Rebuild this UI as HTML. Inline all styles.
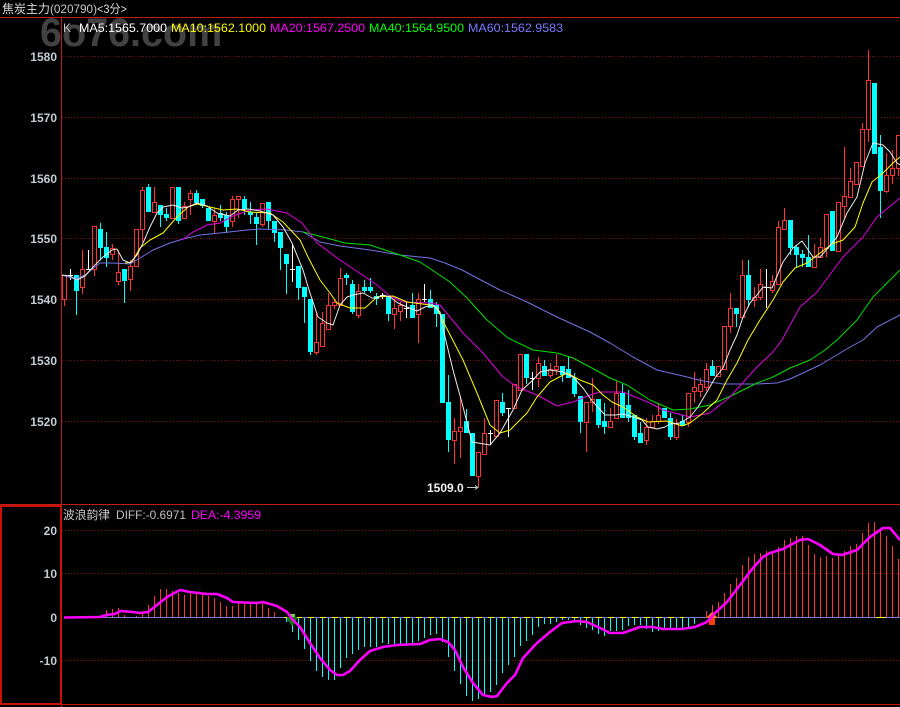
<!DOCTYPE html>
<html>
<head>
<meta charset="utf-8">
<title>焦炭主力</title>
<style>
html,body{margin:0;padding:0;background:#000;width:900px;height:707px;overflow:hidden}
svg{display:block}
text{font-family:"Liberation Sans","Noto Sans CJK SC",sans-serif;font-size:12px}
.ax{font-weight:bold;fill:#c4ccd4;text-anchor:end}
</style>
</head>
<body>
<svg width="900" height="707" viewBox="0 0 900 707" xmlns="http://www.w3.org/2000/svg">
<rect width="900" height="707" fill="#000"/>

<!-- watermark -->
<text x="40" y="46" style="font-size:39.5px;font-weight:bold" fill="#424242">6o76.com</text>

<!-- grid -->
<path fill="none" stroke="#8a0c0c" stroke-width="1" stroke-dasharray="1 2" d="M62 56.5H900M62 117.5H900M62 178.5H900M62 238.5H900M62 299.5H900M62 360.5H900M62 421.5H900M62 530.5H900M62 573.5H900M62 660.5H900"/>

<!-- frame -->
<path fill="none" stroke="#c01c14" stroke-width="1" d="M0 17.5H900M61.5 17V505M0 504.5H900M61.5 704V707"/>
<path fill="none" stroke="#c81206" stroke-width="1" d="M62 704.5H900"/>
<path fill="none" stroke="#c81206" stroke-width="2" d="M1 506V704M0 506H62M61 505V705M0 704H62"/>

<!-- candles: red outlines -->
<path fill="none" stroke="#ff3232" stroke-width="1" d="M62.5 275.5h4v24h-4zM80.5 269.5h4v18h-4zM92.5 226.5h4v43h-4zM110.5 248.5h4v6h-4zM116.5 272.5h4v9h-4zM128.5 266.5h4v13h-4zM134.5 229.5h4v37h-4zM140.5 190.5h4v39h-4zM152.5 202.5h4v10h-4zM170.5 187.5h4v31h-4zM182.5 206.5h4v12h-4zM188.5 193.5h4v6h-4zM212.5 215.5h4v6h-4zM230.5 199.5h4v22h-4zM236.5 196.5h4v3h-4zM260.5 203.5h4v21h-4zM314.5 342.5h4v10h-4zM320.5 323.5h4v23h-4zM326.5 305.5h4v24h-4zM332.5 302.5h4v3h-4zM338.5 278.5h4v27h-4zM356.5 291.5h4v24h-4zM392.5 308.5h4v6h-4zM398.5 305.5h4v6h-4zM416.5 299.5h4v15h-4zM452.5 431.5h4v9h-4zM458.5 427.5h4v4h-4zM476.5 452.5h4v24h-4zM482.5 433.5h4v21h-4zM494.5 400.5h4v36h-4zM512.5 384.5h4v24h-4zM518.5 354.5h4v36h-4zM536.5 363.5h4v15h-4zM548.5 369.5h4v6h-4zM554.5 366.5h4v3h-4zM584.5 402.5h4v20h-4zM590.5 399.5h4v3h-4zM608.5 421.5h4v6h-4zM614.5 393.5h4v25h-4zM644.5 427.5h4v13h-4zM650.5 421.5h4v6h-4zM656.5 415.5h4v6h-4zM674.5 423.5h4v14h-4zM686.5 393.5h4v29h-4zM692.5 387.5h4v4h-4zM698.5 384.5h4v7h-4zM704.5 369.5h4v18h-4zM716.5 366.5h4v10h-4zM722.5 326.5h4v43h-4zM728.5 308.5h4v18h-4zM740.5 275.5h4v42h-4zM752.5 297.5h4v3h-4zM758.5 284.5h4v13h-4zM770.5 281.5h4v9h-4zM776.5 227.5h4v57h-4zM782.5 220.5h4v9h-4zM812.5 257.5h4v10h-4zM818.5 247.5h4v10h-4zM824.5 214.5h4v34h-4zM836.5 202.5h4v49h-4zM842.5 196.5h4v10h-4zM848.5 181.5h4v16h-4zM854.5 162.5h4v22h-4zM860.5 129.5h4v37h-4zM866.5 80.5h4v49h-4zM884.5 175.5h4v16h-4zM890.5 168.5h4v7h-4zM896.5 135.5h4v33h-4z"/>
<!-- red wicks -->
<path fill="none" stroke="#ff3232" stroke-width="1" d="M64.5 299V306M82.5 250V269M82.5 287V294M94.5 269V276M112.5 244V248M112.5 254V260M118.5 250V272M118.5 281V285M130.5 260V266M130.5 279V291M142.5 187V190M142.5 229V242M154.5 187V202M184.5 202V206M190.5 190V193M190.5 199V215M214.5 208V215M214.5 221V233M232.5 196V199M232.5 221V227M238.5 199V218M262.5 224V227M316.5 313V342M316.5 352V355M322.5 312V323M328.5 293V305M334.5 299V302M334.5 305V309M340.5 268V278M358.5 284V291M358.5 315V318M394.5 299V308M394.5 314V329M400.5 302V305M400.5 311V321M418.5 293V299M418.5 314V343M454.5 418V431M454.5 440V464M460.5 396V427M460.5 431V458M478.5 476V487M484.5 418V433M538.5 357V363M538.5 378V387M550.5 363V369M550.5 375V378M556.5 354V366M556.5 369V375M586.5 422V452M592.5 378V399M592.5 402V412M610.5 408V421M616.5 381V393M646.5 418V427M646.5 440V445M652.5 415V421M658.5 403V415M658.5 421V424M676.5 419V423M676.5 437V440M688.5 422V427M694.5 372V387M694.5 391V403M700.5 378V384M700.5 391V397M706.5 363V369M706.5 387V391M730.5 293V308M730.5 326V333M742.5 260V275M754.5 287V297M754.5 300V307M760.5 269V284M760.5 297V300M772.5 275V281M772.5 290V293M778.5 221V227M784.5 208V220M814.5 244V257M820.5 238V247M826.5 248V257M844.5 147V196M844.5 206V218M850.5 168V181M862.5 123V129M868.5 50V80M868.5 129V142M886.5 153V175M886.5 191V193M892.5 150V168M892.5 175V184M898.5 168V176"/>

<!-- cyan wicks -->
<path fill="none" stroke="#00ffff" stroke-width="1" d="M76.5 275V315M100.5 223V260M106.5 232V267M124.5 269V303M148.5 184V212M160.5 205V227M166.5 208V221M178.5 187V224M196.5 190V205M202.5 199V208M220.5 205V221M226.5 212V233M244.5 196V215M250.5 202V224M256.5 212V245M268.5 202V229M274.5 221V242M280.5 232V270M286.5 254V294M298.5 266V300M304.5 287V323M310.5 299V355M346.5 273V285M352.5 280V314M364.5 280V293M370.5 278V293M376.5 293V305M388.5 296V321M412.5 293V318M430.5 290V308M436.5 302V327M448.5 375V452M466.5 409V433M502.5 393V416M526.5 354V384M544.5 360V376M562.5 366V382M568.5 357V378M574.5 373V397M580.5 396V433M598.5 399V428M604.5 403V434M622.5 384V418M628.5 390V422M634.5 415V440M640.5 422V443M670.5 413V440M682.5 415V426M712.5 360V376M736.5 308V327M748.5 260V307M790.5 220V255M796.5 245V268M802.5 250V267M808.5 235V267M880.5 135V218"/>
<!-- cyan bodies -->
<path fill="none" stroke="#00ffff" stroke-width="5" d="M76.5 275V291M100.5 229V248M106.5 247V258M124.5 269V281M148.5 187V212M160.5 205V215M166.5 214V218M178.5 187V221M196.5 193V203M202.5 199V206M208.5 208V221M220.5 213V218M226.5 215V227M244.5 199V209M250.5 212V215M256.5 217V224M268.5 202V221M274.5 221V233M280.5 232V248M286.5 254V264M298.5 266V288M304.5 287V297M310.5 299V352M346.5 275V278M352.5 284V312M364.5 287V291M370.5 287V291M376.5 296V299M388.5 296V314M412.5 305V318M430.5 299V308M436.5 305V314M442.5 314V403M448.5 402V440M466.5 421V433M472.5 433V476M502.5 402V413M526.5 354V378M544.5 366V376M562.5 366V375M568.5 369V378M574.5 378V394M580.5 396V422M598.5 399V425M604.5 421V427M622.5 393V418M628.5 405V418M634.5 415V437M640.5 433V443M664.5 408V418M670.5 418V437M682.5 421V426M712.5 366V376M736.5 308V314M748.5 275V300M790.5 220V248M796.5 247V255M802.5 254V258M808.5 257V267M832.5 211V251M874.5 83V154M880.5 147V191"/>

<!-- white doji -->
<path fill="none" stroke="#ffffff" stroke-width="1" d="M70.5 269V280M68 275.5H73M88.5 250V269M86 269.5H91M292.5 245V282M290 269.5H295M382.5 293V299M380 295.5H385M406.5 302V318M404 308.5H409M424.5 284V302M422 299.5H427M490.5 430V445M488 433.5H493M508.5 408V437M506 408.5H511M532.5 372V390M530 378.5H535M766.5 269V308M764 287.5H769"/>

<!-- MA60 -->
<polyline fill="none" stroke="#7373e6" stroke-width="1" stroke-linejoin="round" points="62,275 75,279 85,275 100,263 113,263 130,264 140,258 153,250 170,243 183,239 200,235 220,233 247,230 260,229 287,230 303,232 320,242 340,246 370,250 400,255 430,258 445,263 462,270 477,278 500,290 527,302 557,317 590,332 610,343 633,357 657,370 683,376 703,381 723,384 757,384 777,383 790,379 820,365 845,350 863,340 877,327 900,315"/>
<!-- MA40 -->
<polyline fill="none" stroke="#00e000" stroke-width="1" stroke-linejoin="round" points="303,232 323,237 345,243 370,245 400,255 420,262 432,270 450,282 467,298 487,320 508,338 533,350 557,353 573,358 590,367 610,378 627,385 650,400 673,410 690,409 710,405 733,395 757,383 773,377 790,368 810,360 825,350 837,340 857,320 873,297 900,270"/>
<!-- MA20 -->
<polyline fill="none" stroke="#e000e0" stroke-width="1" stroke-linejoin="round" points="182,240 193,232 207,225 220,223 233,216 250,210 267,209 287,213 302,223 317,243 340,260 355,270 377,285 390,296 403,302 430,303 440,305 463,333 483,353 503,377 517,387 537,395 557,406 573,402 590,395 600,392 623,392 650,403 663,410 690,417 710,413 730,397 757,367 772,353 782,340 800,307 817,292 843,257 863,237 877,217 900,198"/>
<!-- MA10 -->
<polyline fill="none" stroke="#ffff00" stroke-width="1" stroke-linejoin="round" points="125,263 132,262 140,248 150,240 163,233 177,217 188,207 197,204 210,207 223,210 237,209 250,212 270,213 283,222 300,240 308,257 320,280 330,293 337,303 350,308 365,308 377,297 393,296 407,302 430,305 437,308 445,325 463,360 477,393 490,425 500,433 510,430 527,413 537,397 550,382 567,373 580,380 593,385 603,395 612,402 623,407 637,417 648,422 667,421 682,426 690,423 703,413 717,400 727,380 737,363 748,340 760,320 773,300 783,282 795,268 807,263 820,253 832,244 843,240 855,227 863,203 872,182 883,173 893,163 900,157"/>
<!-- MA5 -->
<polyline fill="none" stroke="#ececec" stroke-width="1" stroke-linejoin="round" points="62,275 70,276 77,280 85,276 93,267 103,257 112,250 117,249 123,260 130,263 137,255 143,243 150,227 157,213 163,207 173,205 182,208 188,207 197,203 207,206 217,213 230,216 238,210 248,209 260,211 273,215 283,227 292,243 303,270 310,293 318,317 327,323 333,325 340,305 347,297 353,295 363,293 372,298 377,298 383,295 390,297 398,303 407,307 417,311 425,307 433,305 440,312 445,337 453,370 462,403 472,442 478,443 490,445 500,433 513,410 522,390 533,380 540,372 550,370 563,372 573,377 583,388 593,402 605,415 615,415 623,414 633,417 642,420 648,427 657,429 665,427 670,424 680,423 690,417 698,407 707,392 715,378 723,368 730,350 737,335 743,317 750,303 757,295 763,287 772,288 783,262 793,248 802,241 813,257 820,257 828,248 837,237 847,213 857,197 865,163 873,143 883,145 890,152 897,163 900,165"/>

<!-- MACD zero line -->
<path fill="none" stroke="#7a7ad8" stroke-width="1" d="M64 617.5H900"/>
<path fill="none" stroke="#ffff00" stroke-width="1" stroke-dasharray="6 6" d="M284 617.5H684"/>
<path fill="none" stroke="#ffff00" stroke-width="1" d="M72 617.5H78M876 617.5H886"/>

<!-- MACD bars -->
<path fill="none" stroke="#ff3232" stroke-width="1" d="M106.5 610V617M112.5 609V617M118.5 608V617M124.5 615V617M136.5 616V617M142.5 611V617M148.5 605V617M154.5 596V617M160.5 589V617M166.5 589V617M172.5 591V617M178.5 593V617M184.5 595V617M190.5 591V617M196.5 593V617M202.5 594V617M208.5 596V617M214.5 598V617M220.5 602V617M226.5 606V617M232.5 606V617M238.5 603V617M244.5 603V617M250.5 603V617M256.5 602V617M262.5 602V617M268.5 608V617M274.5 612V617M706.5 611V617M712.5 605V617M718.5 602V617M724.5 593V617M730.5 584V617M736.5 578V617M742.5 565V617M748.5 557V617M754.5 554V617M760.5 553V617M766.5 551V617M772.5 553V617M778.5 547V617M784.5 540V617M790.5 538V617M796.5 536V617M802.5 536V617M808.5 545V617M814.5 554V617M820.5 557V617M826.5 556V617M832.5 558V617M838.5 554V617M844.5 551V617M850.5 546V617M856.5 544V617M862.5 533V617M868.5 523V617M874.5 522V617M880.5 529V617M886.5 536V617M892.5 546V617M898.5 559V617"/>
<path fill="none" stroke="#00ffff" stroke-width="1" d="M286.5 618V622M292.5 618V632M298.5 618V640M304.5 618V649M310.5 618V661M316.5 618V671M322.5 618V677M328.5 618V680M334.5 618V680M340.5 618V668M346.5 618V658M352.5 618V654M358.5 618V650M364.5 618V647M370.5 618V647M376.5 618V647M382.5 618V643M388.5 618V644M394.5 618V644M400.5 618V644M406.5 618V644M412.5 618V643M418.5 618V641M424.5 618V638M430.5 618V635M436.5 618V634M442.5 618V642M448.5 618V657M454.5 618V671M460.5 618V684M466.5 618V696M472.5 618V701M478.5 618V699M484.5 618V696M490.5 618V692M496.5 618V685M502.5 618V673M508.5 618V665M514.5 618V657M520.5 618V646M526.5 618V641M532.5 618V635M538.5 618V627M544.5 618V624M550.5 618V624M556.5 618V622M562.5 618V620M568.5 618V620M574.5 618V620M580.5 618V625M586.5 618V628M592.5 618V630M598.5 618V634M604.5 618V636M610.5 618V631M616.5 618V631M622.5 618V630M628.5 618V626M634.5 618V625M640.5 618V625M646.5 618V629M652.5 618V632M658.5 618V631M664.5 618V629M670.5 618V628M676.5 618V628M682.5 618V629M688.5 618V627M694.5 618V624"/>

<!-- MACD markers -->
<path fill="#0e7a12" d="M287 617h10v2l-2 3-2 3h-2l-2-3-2-3z"/>
<path fill="#6ed63a" d="M289 614h6v3h-6z"/>
<path fill="#f2420a" d="M709 618h6v7h-6z"/>
<path fill="#ff7a10" d="M712 612l6 6h-12z"/>

<!-- DIFF -->
<polyline fill="none" stroke="#ff00ff" stroke-width="2.6" stroke-linejoin="round" points="64,617.5 100,617 106,615 115,614 120,611 133,612 140,613 148,612 157,605 167,597 180,590 190,592 207,594 217,594 227,598 233,602 257,603 263,602 277,606 287,612 293,620 300,627 310,643 320,658 330,670 337,675 343,675 350,671 360,660 370,651 383,647 397,645 420,644 430,640 440,639 448,642 455,650 463,667 473,683 483,695 492,697 497,696 507,683 515,675 523,658 537,643 550,632 562,623 577,621 587,622 600,628 610,633 623,633 640,627 652,627 663,629 682,629 695,627 707,622 715,613 727,602 740,585 753,568 763,557 770,553 783,549 800,540 808,539 820,545 833,554 842,555 857,550 870,537 883,528 890,528 900,540"/>

<!-- header text -->
<text x="2" y="13" fill="#dcdcdc">焦炭主力</text>
<text x="50" y="13" fill="#c8c8c8" textLength="47" lengthAdjust="spacingAndGlyphs">(020790)</text>
<text x="97" y="13" fill="#dcdcdc" textLength="30" lengthAdjust="spacingAndGlyphs">&lt;3分&gt;</text>

<text x="63" y="32" fill="#c0c0c0">K</text>
<text x="79" y="32" fill="#ffffff" textLength="88" lengthAdjust="spacingAndGlyphs">MA5:1565.7000</text>
<text x="171" y="32" fill="#ffff00" textLength="95" lengthAdjust="spacingAndGlyphs">MA10:1562.1000</text>
<text x="270" y="32" fill="#ff00ff" textLength="95" lengthAdjust="spacingAndGlyphs">MA20:1567.2500</text>
<text x="369" y="32" fill="#00ff00" textLength="95" lengthAdjust="spacingAndGlyphs">MA40:1564.9500</text>
<text x="468" y="32" fill="#7a7aff" textLength="95" lengthAdjust="spacingAndGlyphs">MA60:1562.9583</text>

<!-- axis labels -->
<text class="ax" x="57" y="61">1580</text>
<text class="ax" x="57" y="122">1570</text>
<text class="ax" x="57" y="183">1560</text>
<text class="ax" x="57" y="243">1550</text>
<text class="ax" x="57" y="304">1540</text>
<text class="ax" x="57" y="365">1530</text>
<text class="ax" x="57" y="426">1520</text>
<text class="ax" x="57" y="535">20</text>
<text class="ax" x="57" y="578">10</text>
<text class="ax" x="57" y="622">0</text>
<text class="ax" x="57" y="665">-10</text>

<!-- low label -->
<text x="427" y="492" fill="#f0f0f0" style="font-weight:bold">1509.0</text>
<path fill="none" stroke="#c8c8c8" stroke-width="1" d="M467 487.5H478M475 485.5L478 487.5L475 489.5"/>

<!-- MACD title -->
<text x="63" y="519" fill="#c8c8c8" textLength="47" lengthAdjust="spacingAndGlyphs">波浪韵律</text>
<text x="116" y="519" fill="#c0c0c0" textLength="70" lengthAdjust="spacingAndGlyphs">DIFF:-0.6971</text>
<text x="191" y="519" fill="#ff00ff" textLength="70" lengthAdjust="spacingAndGlyphs">DEA:-4.3959</text>
</svg>
</body>
</html>
